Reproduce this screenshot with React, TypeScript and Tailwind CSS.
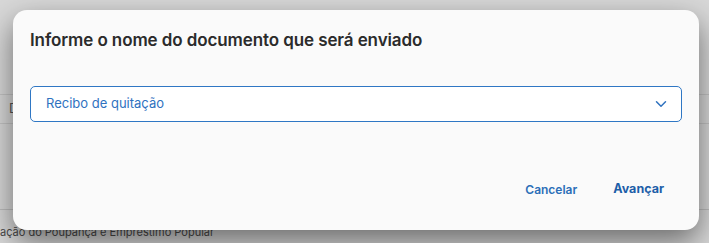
import { ChevronDown } from "lucide-react";

export default function App() {
  return (
    <div
      className="relative w-[709px] h-[243px] overflow-hidden bg-[#d8d8d8]"
      style={{ fontFamily: "Inter, 'Noto Sans', sans-serif" }}
    >
      {/* Page behind the overlay */}
      <div className="flex flex-col h-full">
        <div className="h-[95px] border-b border-[#c4c4c4]" />
        <div className="h-[28px] flex items-center pl-[9px] text-[13px] text-[#555]">D</div>
        <div className="h-[86px] border-t border-[#c4c4c4]" />
        <div className="border-t border-[#bdbdbd] pt-[14px] pl-0 text-[11px] text-[#4a4a4a] whitespace-nowrap">
          ação do Poupança e Empréstimo Popular
        </div>
      </div>

      {/* Modal */}
      <div className="absolute left-[13px] top-[10px] w-[686px] h-[220px] rounded-[14px] bg-[#fafafa] shadow-[0_12px_30px_rgba(0,0,0,0.5)] flex flex-col px-[17px]">
        <h2 className="mt-[19px] text-[17px] font-semibold leading-[22px] text-[#2b2b2b] tracking-[-0.1px]">
          Informe o nome do documento que será enviado
        </h2>
        <button
          type="button"
          className="mt-[35px] h-[36px] w-full rounded-[5px] border border-[#2f77c4] bg-white flex items-center justify-between pl-[15px] pr-[11px]"
        >
          <span className="text-[13px] text-[#2f72bf]">Recibo de quitação</span>
          <ChevronDown className="w-[18px] h-[18px] text-[#2f72bf]" strokeWidth={2} />
        </button>
        <div className="mt-auto mb-[31px] flex justify-end items-center gap-[36px] pr-[18px]">
          <button type="button" className="text-[12px] font-semibold text-[#2c6fb8]">
            Cancelar
          </button>
          <button type="button" className="text-[12.5px] font-bold text-[#1c5ea8]">
            Avançar
          </button>
        </div>
      </div>
    </div>
  );
}
